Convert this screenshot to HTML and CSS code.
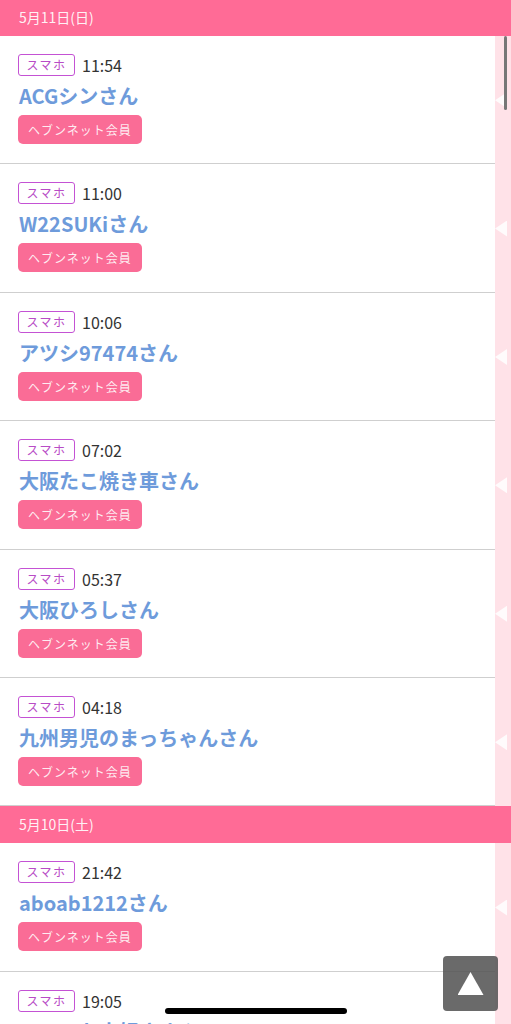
FILE: index.html
```html
<!DOCTYPE html>
<html>
<head>
    <meta charset="utf-8">
    <title>アクセス履歴</title>
    <link rel="stylesheet" href="styles.css">
</head>
<body>
    <div class="page">
        <!-- 5月11日 -->
        <div class="day-head">5月11日(日)</div>
        <div class="row">
            <div class="item">
                <div class="meta"><span class="device">スマホ</span><span class="time">11:54</span></div>
                <div class="name">ACGシンさん</div>
                <span class="member">ヘブンネット会員</span>
            </div>
            <div class="side"></div>
        </div>
        <div class="row">
            <div class="item">
                <div class="meta"><span class="device">スマホ</span><span class="time">11:00</span></div>
                <div class="name">W22SUKiさん</div>
                <span class="member">ヘブンネット会員</span>
            </div>
            <div class="side"></div>
        </div>
        <div class="row">
            <div class="item">
                <div class="meta"><span class="device">スマホ</span><span class="time">10:06</span></div>
                <div class="name">アツシ97474さん</div>
                <span class="member">ヘブンネット会員</span>
            </div>
            <div class="side"></div>
        </div>
        <div class="row">
            <div class="item">
                <div class="meta"><span class="device">スマホ</span><span class="time">07:02</span></div>
                <div class="name">大阪たこ焼き車さん</div>
                <span class="member">ヘブンネット会員</span>
            </div>
            <div class="side"></div>
        </div>
        <div class="row">
            <div class="item">
                <div class="meta"><span class="device">スマホ</span><span class="time">05:37</span></div>
                <div class="name">大阪ひろしさん</div>
                <span class="member">ヘブンネット会員</span>
            </div>
            <div class="side"></div>
        </div>
        <div class="row">
            <div class="item">
                <div class="meta"><span class="device">スマホ</span><span class="time">04:18</span></div>
                <div class="name">九州男児のまっちゃんさん</div>
                <span class="member">ヘブンネット会員</span>
            </div>
            <div class="side"></div>
        </div>

        <!-- 5月10日 -->
        <div class="day-head">5月10日(土)</div>
        <div class="row">
            <div class="item">
                <div class="meta"><span class="device">スマホ</span><span class="time">21:42</span></div>
                <div class="name">aboab1212さん</div>
                <span class="member">ヘブンネット会員</span>
            </div>
            <div class="side"></div>
        </div>
        <div class="row">
            <div class="item">
                <div class="meta"><span class="device">スマホ</span><span class="time">19:05</span></div>
                <div class="name">ひでっち大好きさん</div>
                <span class="member">ヘブンネット会員</span>
            </div>
            <div class="side"></div>
        </div>
    </div>

    <div class="scroll-bar"></div>
    <a class="go-top" href="#"></a>
    <div class="home-bar"></div>
</body>
</html>
```

FILE: styles.css
```css
html, body {
    margin: 0;
    padding: 0;
}
body {
    width: 511px;
    height: 1024px;
    overflow: hidden;
    position: relative;
    background: #fff;
    font-family: "Noto Sans CJK JP", "Noto Sans", sans-serif;
    color: #333;
}
.page {
    margin-top: -1px; /* 少しスクロールした状態 */
}
.day-head {
    height: 37px;
    line-height: 37px;
    padding-left: 19px;
    background: #ff6b96;
    color: rgba(255, 255, 255, 0.92);
    font-size: 14px;
}
.row {
    display: flex;
}
.item {
    width: 495px;
    box-sizing: border-box;
    padding: 18px 0 19.4px 18px;
    border-bottom: 1px solid #cfcfcf;
}
.meta {
    display: flex;
    align-items: center;
    height: 22px;
}
.device {
    box-sizing: border-box;
    width: 57px;
    height: 22px;
    line-height: 19px;
    text-align: center;
    border: 1.5px solid #c452d4;
    border-radius: 3px;
    color: #b84cc6;
    font-size: 12px;
    letter-spacing: 1.5px;
}
.time {
    margin-left: 7px;
    font-size: 16px;
    color: #333;
}
.name {
    margin-top: 6px;
    height: 28px;
    line-height: 28px;
    font-size: 20px;
    font-weight: bold;
    color: #6e9bdb;
    padding-left: 1px;
}
.member {
    display: inline-block;
    margin-top: 5px;
    width: 124px;
    height: 29px;
    line-height: 29px;
    text-align: center;
    background: #fa6c96;
    border-radius: 5px;
    color: rgba(255, 255, 255, 0.88);
    font-size: 12px;
    letter-spacing: 1px;
}
.side {
    flex: 1;
    background: #ffe2e8;
    display: flex;
    align-items: center;
}
/* 右側の白い三角 */
.side::before {
    content: "";
    width: 12px;
    height: 16px;
    background: rgba(255, 255, 255, 0.85);
    clip-path: polygon(0 50%, 100% 0, 100% 100%);
}
.scroll-bar {
    position: absolute;
    left: 504px;
    top: 36px;
    width: 3px;
    height: 74px;
    border-radius: 2px;
    background: #777;
}
.go-top {
    position: absolute;
    left: 443px;
    top: 956px;
    width: 55px;
    height: 55px;
    border-radius: 4px;
    background: rgba(85, 85, 85, 0.88);
    display: flex;
    align-items: center;
    justify-content: center;
}
.go-top::before {
    content: "";
    width: 26px;
    height: 23px;
    background: #fff;
    clip-path: polygon(50% 0, 100% 100%, 0 100%);
}
.home-bar {
    position: absolute;
    left: 165px;
    top: 1008px;
    width: 182px;
    height: 6px;
    border-radius: 3px;
    background: #000;
}
```
